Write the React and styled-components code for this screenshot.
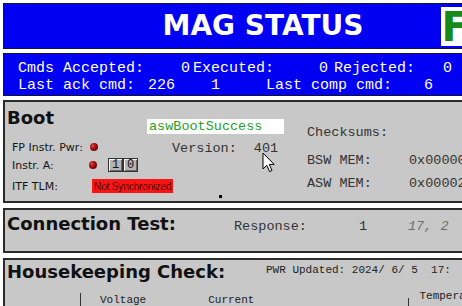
import React from "react";
import styled, { createGlobalStyle } from "styled-components";

const MONO = `"Liberation Mono", "Courier New", monospace`;
const SANS = `"DejaVu Sans", Verdana, sans-serif`;
const NARROW = `"Liberation Sans", Arial, sans-serif`;

const GlobalStyle = createGlobalStyle`
  html, body {
    margin: 0;
    padding: 0;
    background: #fff;
    overflow: hidden;
  }
`;

function App() {
  return (
    <Page>
      <GlobalStyle />
      <TitleBar>
        <Title>MAG STATUS</Title>
        <FlagBox>F</FlagBox>
      </TitleBar>

      <StatusBox>
        <StatRow>
          <StatCell $w={172}><span>Cmds Accepted:</span><span>0</span></StatCell>
          <StatCell $w={135} $ml={3}><span>Executed:</span><span>0</span></StatCell>
          <StatCell $w={118} $ml={6}><span>Rejected:</span><span>0</span></StatCell>
        </StatRow>
        <StatRow>
          <StatCell $w={157}><span>Last ack cmd:</span><span>226</span></StatCell>
          <StatCell $w={45}><span></span><span>1</span></StatCell>
          <StatCell $w={167} $ml={46}><span>Last comp cmd:</span><span>6</span></StatCell>
        </StatRow>
      </StatusBox>

      <BootPanel>
        <LeftCol>
          <PanelTitle>Boot</PanelTitle>
          <IndicatorList>
            <IndRow $h={14}>
              <IndLabel>FP Instr. Pwr:</IndLabel>
              <Led />
            </IndRow>
            <IndRow $h={16} $mt={3}>
              <IndLabel>Instr. A:</IndLabel>
              <Led $ml={-1} />
              <ToggleGroup>
                <Toggle>1</Toggle>
                <Toggle>0</Toggle>
              </ToggleGroup>
            </IndRow>
            <IndRow $h={16} $mt={5}>
              <IndLabel>ITF TLM:</IndLabel>
              <SyncBox>Not Synchronized</SyncBox>
            </IndRow>
          </IndicatorList>
        </LeftCol>

        <MiddleCol>
          <StringBox>aswBootSuccess</StringBox>
          <VersionRow>
            <span>Version:</span>
            <VersionValue>401</VersionValue>
          </VersionRow>
        </MiddleCol>

        <RightCol>
          <MonoText>Checksums:</MonoText>
          <MemRow $mt={13}>
            <MemLabel>BSW MEM:</MemLabel>
            <span>0x00000000</span>
          </MemRow>
          <MemRow $mt={8}>
            <MemLabel>ASW MEM:</MemLabel>
            <span>0x00002A4F</span>
          </MemRow>
        </RightCol>

        <Cursor width="13" height="21" viewBox="0 0 13 21">
          <path d="M1 1 L1 17 L4.8 13.3 L7.6 19.6 L10 18.5 L7.3 12.4 L12.2 12.4 Z" fill="#fff" stroke="#000" strokeWidth="1" strokeLinejoin="round" />
        </Cursor>
        <Dot />
      </BootPanel>

      <ConnPanel>
        <PanelTitle>Connection Test:</PanelTitle>
        <MonoText>Response:</MonoText>
        <MonoText>1</MonoText>
        <Disabled>17, 2</Disabled>
      </ConnPanel>

      <HkPanel>
        <HkTop>
          <PanelTitle>Housekeeping Check:</PanelTitle>
          <SmallMono $mt={2}>PWR Updated: 2024/ 6/ 5  17:</SmallMono>
        </HkTop>
        <HeaderRow>
          <Divider $ml={73} $mt={3} />
          <SmallMono $ml={19} $mt={4}>Voltage</SmallMono>
          <SmallMono $ml={62} $mt={4}>Current</SmallMono>
          <Divider $ml={154} $mt={8} />
          <SmallMono $ml={10}>Temperature</SmallMono>
        </HeaderRow>
      </HkPanel>
    </Page>
  );
}

const Page = styled.div`
  width: 520px;
  padding: 3px 0 0 3px;
  display: flex;
  flex-direction: column;
`;

const TitleBar = styled.div`
  box-sizing: border-box;
  height: 46px;
  background: #0000f2;
  border: 1px solid #14142a;
  display: grid;
  grid-template-columns: 1fr auto 1fr;
  align-items: center;
`;

const Title = styled.h1`
  grid-column: 2;
  margin: 0;
  font: bold 28px/1 ${SANS};
  color: #fff;
`;

const FlagBox = styled.div`
  justify-self: start;
  margin-left: 78px;
  width: 44px;
  height: 39px;
  background: #fff;
  color: #178a17;
  font: bold 40px/40px ${SANS};
  overflow: hidden;
`;

const StatusBox = styled.div`
  box-sizing: border-box;
  margin-top: 4px;
  height: 43px;
  background: #0000f2;
  border: 1px solid #14142a;
  padding: 6px 0 0 14px;
  font: 15px/17px ${MONO};
  color: #fff;
`;

const StatRow = styled.div`
  display: flex;
  white-space: pre;
`;

const StatCell = styled.div`
  display: flex;
  justify-content: space-between;
  flex-shrink: 0;
  width: ${(p) => p.$w}px;
  margin-left: ${(p) => p.$ml || 0}px;
`;

const Panel = styled.section`
  position: relative;
  box-sizing: border-box;
  background: #c8c8c8;
  border: 2px solid #2a2a2a;
`;

const BootPanel = styled(Panel)`
  margin-top: 4px;
  height: 103px;
  display: flex;
  padding: 6px 0 0 2px;
`;

const PanelTitle = styled.h2`
  margin: 0;
  font: bold 18px/20px ${SANS};
  color: #111;
  white-space: nowrap;
`;

const LeftCol = styled.div`
  width: 140px;
  flex-shrink: 0;
  display: flex;
  flex-direction: column;
`;

const IndicatorList = styled.div`
  margin-top: 12px;
  padding-left: 5px;
  display: flex;
  flex-direction: column;
`;

const IndRow = styled.div`
  display: flex;
  align-items: center;
  height: ${(p) => p.$h}px;
  margin-top: ${(p) => p.$mt || 0}px;
`;

const IndLabel = styled.span`
  width: 78px;
  flex-shrink: 0;
  font: 11px/13px ${SANS};
  color: #151515;
  white-space: nowrap;
`;

const Led = styled.span`
  width: 8px;
  height: 8px;
  flex-shrink: 0;
  margin-left: ${(p) => p.$ml || 0}px;
  border-radius: 50%;
  background: radial-gradient(circle at 35% 35%, #e24a4a 0, #9a0808 45%, #4a0000 100%);
`;

const ToggleGroup = styled.div`
  display: flex;
  flex-shrink: 0;
  margin-left: 11px;
`;

const Toggle = styled.span`
  box-sizing: border-box;
  width: 15px;
  height: 14px;
  border: 1px solid #333;
  background: #b4b4b4;
  box-shadow: inset 1px 1px 0 #f4f4f4, inset -1px -1px 0 #6a6a6a;
  font: 12px/12px ${MONO};
  color: #111;
  text-align: center;
`;

const SyncBox = styled.span`
  position: relative;
  flex-shrink: 0;
  margin-left: 2px;
  width: 81px;
  height: 14px;
  background: #fa1414;
  color: #3a0000;
  font: 10.5px/14px ${NARROW};
  letter-spacing: -0.35px;
  text-align: center;
  white-space: nowrap;
  overflow: hidden;
  &::after {
    content: "";
    position: absolute;
    inset: 0;
    background: repeating-linear-gradient(120deg, transparent 0 3px, rgba(250, 20, 20, 0.65) 3px 4px);
  }
`;

const MiddleCol = styled.div`
  width: 160px;
  flex-shrink: 0;
  display: flex;
  flex-direction: column;
`;

const StringBox = styled.div`
  margin-top: 11px;
  width: 137px;
  height: 15px;
  padding-left: 2px;
  box-sizing: border-box;
  background: #fff;
  color: #27a027;
  font: 13.5px/15px ${MONO};
`;

const MonoText = styled.span`
  font: 13.5px/15px ${MONO};
  color: #333;
  white-space: pre;
`;

const VersionRow = styled.div`
  display: flex;
  margin-top: 7px;
  padding-left: 25px;
  font: 13.5px/15px ${MONO};
  color: #333;
`;

const VersionValue = styled.span`
  margin-left: 17px;
`;

const RightCol = styled.div`
  margin-top: 17px;
  display: flex;
  flex-direction: column;
  white-space: nowrap;
`;

const MemRow = styled.div`
  display: flex;
  margin-top: ${(p) => p.$mt}px;
  font: 13.5px/15px ${MONO};
  color: #333;
`;

const MemLabel = styled.span`
  width: 102px;
  flex-shrink: 0;
`;

const Cursor = styled.svg`
  position: absolute;
  left: 257px;
  top: 50px;
`;

const Dot = styled.span`
  position: absolute;
  left: 214px;
  top: 93px;
  width: 3px;
  height: 3px;
  background: #000;
`;

const ConnPanel = styled(Panel)`
  margin-top: 5px;
  height: 45px;
  padding: 4px 0 0 2px;
  display: grid;
  grid-template-columns: 227px 125px 49px auto;
  align-items: baseline;
  align-content: start;
`;

const Disabled = styled(MonoText)`
  color: #6e6e6e;
  font-style: italic;
`;

const HkPanel = styled(Panel)`
  margin-top: 5px;
  height: 60px;
  padding: 2px 0 0 2px;
`;

const HkTop = styled.div`
  display: grid;
  grid-template-columns: 259px auto;
  align-items: start;
`;

const SmallMono = styled.span`
  flex-shrink: 0;
  margin-left: ${(p) => p.$ml || 0}px;
  margin-top: ${(p) => p.$mt || 0}px;
  font: 11px/13px ${MONO};
  color: #222;
  white-space: pre;
`;

const HeaderRow = styled.div`
  display: flex;
  align-items: flex-start;
  margin-top: 8px;
`;

const Divider = styled.span`
  width: 1px;
  height: 20px;
  flex-shrink: 0;
  margin-left: ${(p) => p.$ml}px;
  margin-top: ${(p) => p.$mt}px;
  background: #333;
`;

export default App;
